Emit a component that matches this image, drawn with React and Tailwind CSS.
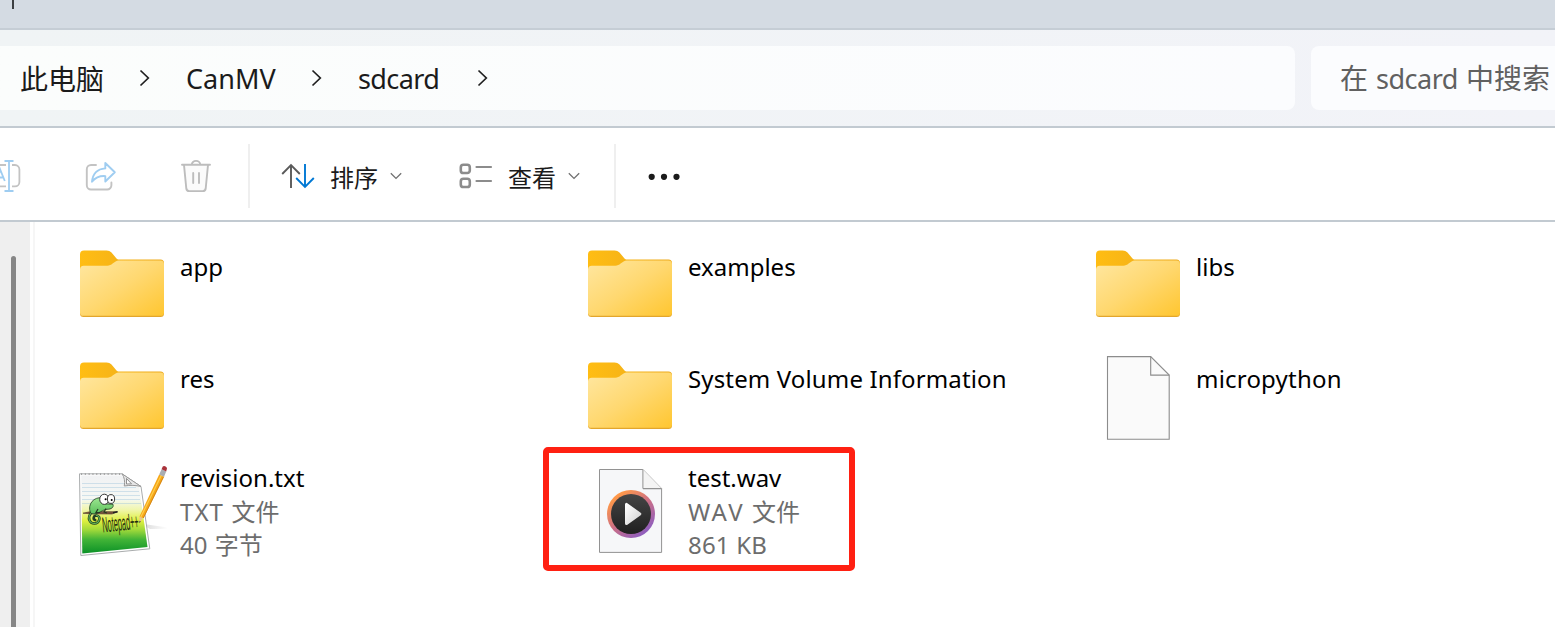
import React from "react";

const Crumb = ({ children, className }) => (
  <span className={`shrink-0 whitespace-nowrap leading-[36px] text-[#1b1b1b] ${className}`}>{children}</span>
);

const ChevronRight = ({ className = "" }) => (
  <svg className={`h-[18px] w-[12px] shrink-0 ${className}`} viewBox="0 0 12 18" fill="none" stroke="#1f1f1f" strokeWidth="1.7">
    <path d="M1.5 1.5 9.3 9 1.5 16.5" />
  </svg>
);

const ChevronDown = ({ className = "" }) => (
  <svg className={`h-[8px] w-[12px] shrink-0 ${className}`} viewBox="0 0 12 8" fill="none" stroke="#707070" strokeWidth="1.3">
    <path d="M.8 1.2 6 6.4l5.2-5.2" />
  </svg>
);

const Divider = () => <div className="h-16 w-[2px] shrink-0 bg-[#efefef]" />;

const RenameIcon = () => (
  <svg className="h-9 w-[22px] shrink-0" viewBox="0 0 22 36" fill="none" strokeWidth="1.8">
    <path d="M0 7H6M12 7h3a4.4 4.4 0 0 1 4.4 4.4V24a4.4 4.4 0 0 1-4.4 4.4h-3M0 28.400H6" stroke="#c3c3c3" />
    <path d="M4.500 3h9M9 3v30M4.500 33h9M-3 23 .2 11.500 4.800 23M-1 19.500H3.500" stroke="#9fcdf1" />
  </svg>
);

const ShareIcon = () => (
  <svg className="h-9 w-9 shrink-0" viewBox="0 0 36 36" fill="none" strokeWidth="1.9" strokeLinejoin="round">
    <path d="M14 7H9a4.2 4.2 0 0 0-4.200 4.200v16.100A4.200 4.200 0 0 0 9 31.500h16.200a4.200 4.200 0 0 0 4.200-4.200v-2.800" stroke="#c3c3c3" strokeLinecap="round" />
    <path d="M23.300 5 32.800 14.300 23.300 23.500v-5.400c-5.500-.4-9.600 1.200-13.300 5.600.8-8 5.300-12.700 13.300-13.300Z" stroke="#9fcdf1" />
  </svg>
);

const TrashIcon = () => (
  <svg className="h-9 w-9 shrink-0" viewBox="0 0 36 36" fill="none" stroke="#bdbdbd" strokeWidth="1.9" strokeLinecap="round">
    <path d="M6 7 8.300 30.500a3 3 0 0 0 3 2.600h13.400a3 3 0 0 0 3-2.600L30 7" fill="#fbfbfb" />
    <path d="M4 6.800h28M13.800 6.500a4.200 3.600 0 0 1 8.400 0M15.200 15v10M21 15v10" />
  </svg>
);

const SortIcon = () => (
  <svg className="h-[26px] w-[34px] shrink-0" viewBox="0 0 34 26" fill="none" strokeWidth="1.9">
    <path d="M10 25V2M1.200 11 10 2.200 18.800 11" stroke="#5a5a5a" />
    <path d="M24 1v23M15.200 15 24 23.800 32.800 15" stroke="#0078d4" />
  </svg>
);

const ViewIcon = () => (
  <svg className="h-[26px] w-[34px] shrink-0" viewBox="0 0 34 26" fill="none" stroke="#8c8c8c" strokeWidth="2.600">
    <rect x="1.800" y="1.800" width="9" height="8.200" rx="2.600" />
    <rect x="1.800" y="15.800" width="9" height="8.200" rx="2.600" />
    <path d="M17.500 4h14.500M17.500 18h14.500" strokeLinecap="round" strokeWidth="2.200" />
  </svg>
);

const FolderIcon = () => (
  <svg className="h-24 w-24 shrink-0" viewBox="0 0 96 96">
    <defs>
      <linearGradient id="folderFront" x1="0" y1="0" x2="1" y2="1">
        <stop offset="0" stopColor="#ffe7a1" />
        <stop offset=".5" stopColor="#ffd870" />
        <stop offset="1" stopColor="#ffc630" />
      </linearGradient>
      <linearGradient id="folderBack" x1="0" y1="0" x2="1" y2="0">
        <stop offset="0" stopColor="#ffbd13" />
        <stop offset="1" stopColor="#eca91c" />
      </linearGradient>
    </defs>
    <path d="M6 10.500a4 4 0 0 1 4-4h22.500c2.200 0 3.600.7 5 2l5 6c.8.700 1.400 1 2.500 1h41.500a3.500 3.500 0 0 1 3.500 3.500V30H6Z" fill="url(#folderBack)" />
    <path d="M6 66v3.500A3.500 3.500 0 0 0 9.500 73h77a3.500 3.500 0 0 0 3.500-3.500V66Z" fill="#e3a62c" />
    <path d="M6 25.500A3.800 3.800 0 0 1 9.800 21.700h23.500c2.300 0 3.700-.8 5.300-2.100l3-2.200c1-.7 2-.9 3.200-.9h41.700a3.500 3.500 0 0 1 3.500 3.500v48.400a3.400 3.400 0 0 1-3.500 3.400h-77A3.400 3.400 0 0 1 6 68.400Z" fill="url(#folderFront)" />
  </svg>
);

const BlankFileIcon = () => (
  <svg className="h-24 w-24 shrink-0" viewBox="0 0 96 96" strokeWidth="1.100">
    <path d="M17.500 .6h43.200l18.500 18.500v64.200H17.500Z" fill="#fafafa" stroke="#8c8c8c" />
    <path d="M60.700 .6v18.500h18.500" fill="none" stroke="#8c8c8c" />
  </svg>
);

const AudioFileIcon = () => (
  <svg className="h-24 w-24 shrink-0" viewBox="0 0 96 96">
    <defs>
      <linearGradient id="ring" x1=".1" y1=".05" x2=".85" y2="1">
        <stop offset=".1" stopColor="#ff9848" />
        <stop offset=".5" stopColor="#cc6f86" />
        <stop offset="1" stopColor="#805acb" />
      </linearGradient>
      <linearGradient id="disc" x1="0" y1="0" x2="0" y2="1">
        <stop offset="0" stopColor="#454545" />
        <stop offset="1" stopColor="#202020" />
      </linearGradient>
      <linearGradient id="play" x1="0" y1="0" x2="1" y2="1">
        <stop offset="0" stopColor="#fff" />
        <stop offset="1" stopColor="#d2d2d2" />
      </linearGradient>
    </defs>
    <path d="M17.500 1.500h43.400l18.700 19v63.900H17.500Z" fill="#f6f7f9" stroke="#929292" />
    <path d="M60.900 1.500v19h18.700" fill="#f4f4f4" stroke="#929292" />
    <path d="M61 21.500h18" stroke="#dcdddf" />
    <circle cx="49" cy="46" r="24" fill="url(#ring)" />
    <circle cx="49" cy="46" r="20" fill="url(#disc)" />
    <path d="M44.500 36.400v19.200L57.800 46Z" fill="url(#play)" stroke="url(#play)" strokeWidth="3" strokeLinejoin="round" />
  </svg>
);

const NotepadIcon = () => (
  <svg className="h-24 w-24 shrink-0 overflow-visible" viewBox="0 0 96 96">
    <defs>
      <linearGradient id="paper" x1="0" y1="0" x2="0" y2="1">
        <stop offset="0" stopColor="#f1f2f4" />
        <stop offset=".3" stopColor="#f5f8f4" />
        <stop offset=".44" stopColor="#f0f6ac" />
        <stop offset=".58" stopColor="#dff03f" />
        <stop offset=".7" stopColor="#9ed83a" />
        <stop offset=".82" stopColor="#42b437" />
        <stop offset="1" stopColor="#0b9127" />
      </linearGradient>
      <linearGradient id="pencilShadow" x1="0" y1="0" x2="1" y2="0">
        <stop offset="0" stopColor="#bbb" />
        <stop offset="1" stopColor="#fff" />
      </linearGradient>
      <linearGradient id="lizard" x1="0" y1="0" x2="0" y2="1">
        <stop offset="0" stopColor="#9be690" />
        <stop offset="1" stopColor="#5dc05c" />
      </linearGradient>
    </defs>
    <path d="M66 55.500 94 59.500 94 60.800 76 61Z" fill="url(#pencilShadow)" opacity=".6" />
    <path d="M5.500 5.800H48L67 18.500 75.800 80.800 6.800 87.500Z" fill="#fff" stroke="#a9acad" strokeWidth="1" />
    <path d="M7.200 7.500H47.500L65.300 19 73.500 79 8.300 85.500Z" fill="url(#paper)" />
    <path d="M8 15.500H51M8 19.500H62M8 23.500H65M8 27.500H66M8 31.500H66M8 35.500H67" stroke="#9fc5dc" strokeWidth=".8" opacity=".55" />
    <path d="M7 6.200H48" stroke="#8a8a8a" strokeWidth="1.300" strokeDasharray="1.100 2.700" />
    <path d="M48 5.800c2.500 3.500 3 7.500 2.300 12.200 6-1 11.500-.8 16.700.5Z" fill="#e7e7e7" stroke="#999" strokeWidth="1" />
    <path d="M52.500 10.500v5.500l5-.2Z" fill="#fff" stroke="#777" strokeWidth=".8" />
    <path d="M9 45.200 17 43.500 43.500 43.800 38 46 17 45.800Z" fill="#7d5540" stroke="#493024" strokeWidth=".6" />
    <path d="M39 44.800 43.500 43.800" stroke="#222" strokeWidth="1.400" />
    <path d="M17 45c-4 5-1.500 10.500 3.500 10.500s7-7.500 2-8c-3.200 0-3.700 4-1.300 4.600" fill="none" stroke="#253f24" strokeWidth="2.600" strokeLinecap="round" />
    <path d="M17 45c-4 5-1.500 10.500 3.500 10.500s7-7.500 2-8" fill="none" stroke="#63b956" strokeWidth="1.200" strokeLinecap="round" />
    <path d="M16.500 45C13 36 20 28.500 28.500 29.800l3 6 7.500.5c1 3-1.500 5-6 5-4 .5-6 2.500-8.500 3.500-3.500 1.500-6 1.500-8 .2Z" fill="url(#lizard)" stroke="#203b20" strokeWidth=".8" />
    <path d="M24 41l-2 3.500h4M32 40.500l-2 3.500 3 1" fill="none" stroke="#243923" strokeWidth="1.200" />
    <ellipse cx="30.300" cy="31.300" rx="4.600" ry="5.100" fill="#fff" stroke="#222" strokeWidth=".9" />
    <ellipse cx="37" cy="31" rx="3.600" ry="4.400" fill="#fff" stroke="#222" strokeWidth=".9" />
    <circle cx="31.600" cy="31.300" r="1" />
    <circle cx="37.700" cy="32" r="1" />
    <text transform="translate(29 64.500) rotate(-6) scale(.5 1.620)" fontFamily="Liberation Sans" fontSize="13.500" fill="#1e2b10" textLength="73" lengthAdjust="spacingAndGlyphs">Notepad++</text>
    <path d="M65.300 55.300 65.500 48 69 50Z" fill="#e9c58d" />
    <path d="M65.300 55.300 65.500 52.700 66.800 53.400Z" fill="#333" />
    <path d="M65.500 48.500 85.200 6.500 90 8.700 69.500 50.300Z" fill="#f6a719" />
    <path d="M66.800 49 87.200 7.500" stroke="#ffd04c" strokeWidth="1.200" />
    <path d="M69.300 50 89.700 8.500" stroke="#c97b12" strokeWidth=".8" />
    <path d="M85.200 6.500 87.600 1.200 92.200 3.400 90 8.700Z" fill="#a9adb2" />
    <path d="M87.600 1.200 88.600-1.300c1-1.500 4.200-.4 4.400 1.700l-.8 3Z" fill="#a9323b" />
  </svg>
);

const Tile = ({ icon, name, children, spacing = "" }) => (
  <div className="flex h-28 items-start pt-2">
    {icon}
    <div className="flex flex-col pl-[10px]">{children || <span className={`mt-[6px] whitespace-nowrap text-[24px] leading-[34px] ${spacing}`}>{name}</span>}</div>
  </div>
);

const Details = ({ name, type, size }) => (
  <div className="-mt-[7px] flex flex-col whitespace-nowrap text-[24px] leading-[33.500px]">
    <span>{name}</span>
    <span className="text-[#6d6d6d]">{type}</span>
    <span className="text-[#6d6d6d]">{size}</span>
  </div>
);

export default function App() {
  return (
    <div className="relative flex h-[627px] w-[1555px] flex-col overflow-hidden bg-white font-['Noto_Sans','Noto_Sans_CJK_SC',sans-serif] text-black">
      <header className="h-[30px] shrink-0 border-b-2 border-[#c5cdd5] bg-[#d4dbe3] pl-[12px]">
        <div className="h-[9px] w-[2px] bg-[#3c3f42]" />
      </header>

      <nav className="flex h-[98px] shrink-0 items-center gap-4 border-b-2 border-[#c2cad1] bg-linear-to-r from-[#f0f4f5] to-[#f2f3f8]">
        <div className="flex h-16 w-[1295px] shrink-0 items-center rounded-r-lg bg-linear-to-r from-[#fbfdfc] to-[#fbfcfe] pl-5">
          <Crumb className="w-[119px] pt-[2px] text-[28px]">此电脑</Crumb>
          <ChevronRight />
          <Crumb className="ml-[35px] w-[125px] pt-[2px] text-[27px]">CanMV</Crumb>
          <ChevronRight />
          <Crumb className="ml-[35px] w-[119px] pt-[2px] text-[27px] tracking-[-0.6px]">sdcard</Crumb>
          <ChevronRight />
        </div>
        <div className="flex h-16 flex-1 items-center overflow-hidden rounded-l-lg bg-[#fbfcfe] pl-[29px]">
          <span className="whitespace-nowrap pt-px text-[27px] leading-[36px] text-[#606060]">
            <span className="text-[28px]">在</span> <span className="ml-px tracking-[-0.5px]">sdcard</span> <span className="ml-px text-[28px]">中搜索</span>
          </span>
        </div>
      </nav>

      <div className="flex h-[94px] shrink-0 items-center border-b-2 border-[#c2cad1] pt-1">
        <RenameIcon />
        <div className="ml-[60px]"><ShareIcon /></div>
        <div className="ml-[60px] mr-[34px]"><TrashIcon /></div>
        <Divider />
        <button className="ml-[31px] flex items-center text-[24px] leading-[32px] text-[#1b1b1b]">
          <SortIcon />
          <span className="ml-[15px] w-[48px] whitespace-nowrap pt-[3px]">排序</span>
          <ChevronDown className="ml-3" />
        </button>
        <button className="ml-[57px] flex items-center text-[24px] leading-[32px] text-[#1b1b1b]">
          <ViewIcon />
          <span className="ml-[15px] w-[48px] whitespace-nowrap pt-[3px]">查看</span>
          <ChevronDown className="ml-3" />
        </button>
        <div className="ml-[34px]"><Divider /></div>
        <svg className="ml-[32px] h-2 w-9" viewBox="0 0 36 8" fill="#1b1b1b">
          <circle cx="3.700" cy="4.800" r="3.100" />
          <circle cx="16" cy="4.800" r="3.100" />
          <circle cx="28.500" cy="4.800" r="3.100" />
        </svg>
      </div>

      <main className="flex flex-1">
        <aside className="w-[30px] shrink-0 bg-[#efefef] pl-[11px] pt-[34px]">
          <div className="h-full w-[5px] rounded-t-full bg-[#868686]" />
        </aside>
        <div className="ml-[3px] w-[2px] shrink-0 bg-[#f6f6f6]" />
        <section className="ml-[39px] mt-[14px] grid shrink-0 auto-rows-[112px] grid-cols-[508px_508px_508px]">
          <Tile icon={<FolderIcon />} name="app" />
          <Tile icon={<FolderIcon />} name="examples" />
          <Tile icon={<FolderIcon />} name="libs" />
          <Tile icon={<FolderIcon />} name="res" />
          <Tile icon={<FolderIcon />} name="System Volume Information" spacing="tracking-[0.14px]" />
          <Tile icon={<BlankFileIcon />} name="micropython" spacing="tracking-[0.2px]" />
          <Tile icon={<NotepadIcon />}>
            <Details name="revision.txt" type={<><span className="tracking-[1.1px]">TXT </span>文件</>} size={<>40 <span className="ml-[1px]">字节</span></>} />
          </Tile>
          <Tile icon={<AudioFileIcon />}>
            <Details name="test.wav" type={<><span className="tracking-[2.2px]">WAV</span> <span className="ml-px">文件</span></>} size={<span className="tracking-[0.2px]">861 KB</span>} />
          </Tile>
        </section>
      </main>

      <div className="absolute left-[543px] top-[447px] h-[124px] w-[312px] rounded-[5px] border-[6px] border-[#ff2012]" />
    </div>
  );
}
